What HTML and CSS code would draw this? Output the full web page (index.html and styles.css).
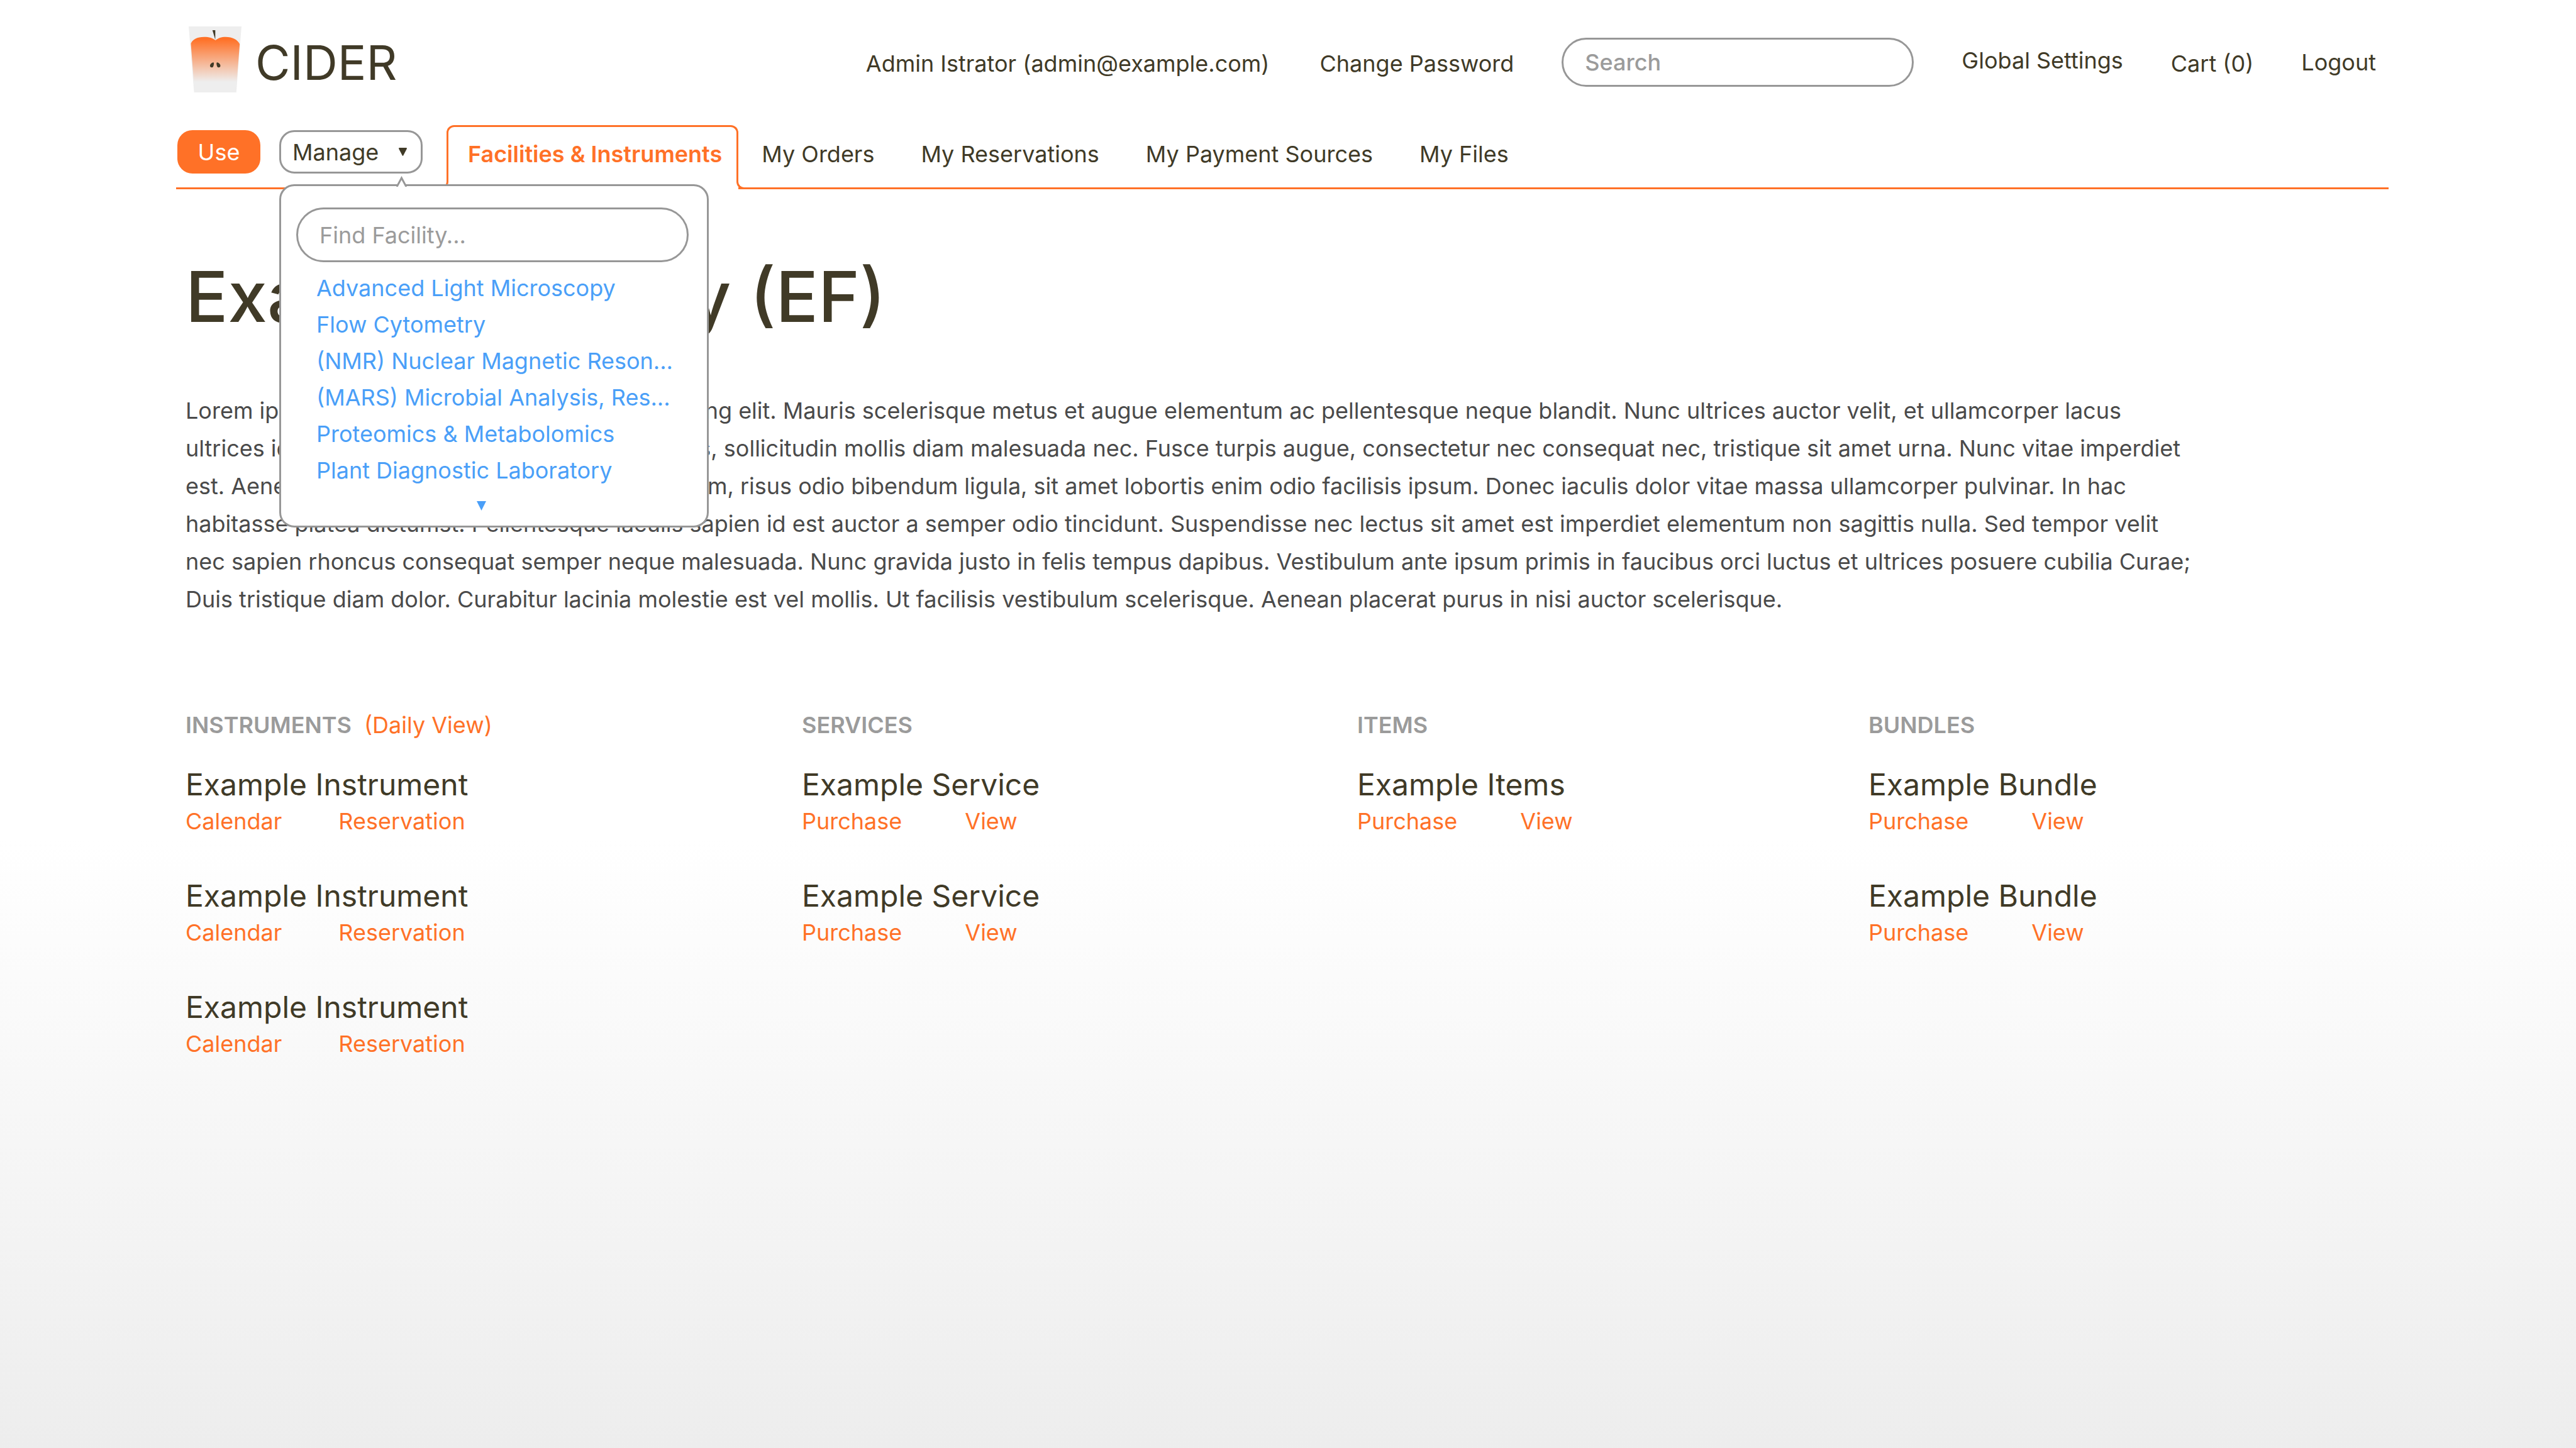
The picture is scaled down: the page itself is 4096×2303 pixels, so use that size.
FILE: index.html
```html
<!DOCTYPE html>
<html lang="en">
<head>
<meta charset="utf-8">
<title>Example Facility (EF) - CIDER</title>
<link rel="stylesheet" href="styles.css">
</head>
<body>
<header class="site-header">
  <a class="brand" href="#">
    <svg class="brand-mark" viewBox="0 0 140 175" aria-hidden="true">
      <defs>
        <linearGradient id="juice" gradientUnits="userSpaceOnUse" x1="0" y1="34" x2="0" y2="147">
          <stop offset="0" stop-color="#ff7127"/>
          <stop offset="1" stop-color="#eeeeee"/>
        </linearGradient>
      </defs>
      <path fill="#eeeeee" d="M0 0H140L126.3 175H14.3Z"/>
      <path fill="url(#juice)" d="M5.8 45.6C11 34 22 28 41 28C55 28 63 31 71 36.7C79 31 86 28 98 28C116 28 129 35 135.3 46.7L127.5 147H13.5Z"/>
      <path fill="#403a27" d="M63 10H70.5V35Z"/>
      <path fill="#403a27" d="M65.5 95.3C67.5 95.5 67.2 102 64.8 107C63.3 109.2 59 109.4 57.4 107C54.4 102.5 60.5 95.3 65.5 95.3Z"/>
      <path fill="#403a27" d="M75.2 95.3C73.2 95.5 73.5 102 75.9 107C77.4 109.2 81.7 109.4 83.3 107C86.3 102.5 80.2 95.3 75.2 95.3Z"/>
    </svg>
    <span class="brand-name">CIDER</span>
  </a>
  <nav class="account" aria-label="Account">
    <a class="account-link account-user low" href="#">Admin Istrator (admin@example.com)</a>
    <a class="account-link low" href="#">Change Password</a>
    <input class="field site-search" type="search" placeholder="Search" aria-label="Search">
    <a class="account-link high" href="#">Global Settings</a>
    <a class="account-link low" href="#">Cart (0)</a>
    <a class="account-link" href="#">Logout</a>
  </nav>
</header>

<nav class="main-nav" aria-label="Main">
  <button class="mode mode-use" type="button">Use</button>
  <div class="manage">
    <button class="mode mode-manage" type="button" aria-expanded="true">Manage
      <svg class="caret" viewBox="0 0 13 13" aria-hidden="true"><path fill="#403a27" d="M1 0H12Q13.3 0.2 12.8 1.8L7.3 12.3Q6.5 13.5 5.7 12.3L0.2 1.8Q-0.3 0.2 1 0Z"/></svg>
    </button>
    <div class="menu">
      <svg class="menu-pointer" viewBox="0 0 17 17" aria-hidden="true"><path fill="#ffffff" d="M1 17L8.5 2L16 17Z"/><path fill="none" stroke="#979797" stroke-width="3" d="M1 17L8.5 3L16 17"/></svg>
      <input class="field menu-search" type="text" placeholder="Find Facility..." aria-label="Find facility">
      <ul class="menu-list">
        <li><a href="#">Advanced Light Microscopy</a></li>
        <li><a href="#">Flow Cytometry</a></li>
        <li><a href="#">(NMR) Nuclear Magnetic Reson...</a></li>
        <li><a href="#">(MARS) Microbial Analysis, Res...</a></li>
        <li><a href="#">Proteomics &amp; Metabolomics</a></li>
        <li><a href="#">Plant Diagnostic Laboratory</a></li>
      </ul>
      <button class="menu-more" type="button" aria-label="More facilities"><svg viewBox="0 0 15 15" aria-hidden="true"><path fill="#4a9ff8" d="M0 0H15L7.5 15Z"/></svg></button>
    </div>
  </div>
  <a class="tab tab-active" href="#"><span class="tab-label">Facilities &amp; Instruments</span></a>
  <a class="tab" href="#">My Orders</a>
  <a class="tab" href="#">My Reservations</a>
  <a class="tab" href="#">My Payment Sources</a>
  <a class="tab" href="#">My Files</a>
</nav>

<main class="content">
  <h1 class="title">Example Facility (EF)</h1>
  <p class="intro">Lorem ipsum dolor sit amet, consectetur adipiscing elit. Mauris scelerisque metus et augue elementum ac pellentesque neque blandit. Nunc ultrices auctor velit, et ullamcorper lacus<br>
  ultrices id. Sed at lorem ornare mi dictum tempus, sollicitudin mollis diam malesuada nec. Fusce turpis augue, consectetur nec consequat nec, tristique sit amet urna. Nunc vitae imperdiet<br>
  est. Aenean mattis, nulla vel tempus feugiat rutrum, risus odio bibendum ligula, sit amet lobortis enim odio facilisis ipsum. Donec iaculis dolor vitae massa ullamcorper pulvinar. In hac<br>
  habitasse platea dictumst. Pellentesque iaculis sapien id est auctor a semper odio tincidunt. Suspendisse nec lectus sit amet est imperdiet elementum non sagittis nulla. Sed tempor velit<br>
  nec sapien rhoncus consequat semper neque malesuada. Nunc gravida justo in felis tempus dapibus. Vestibulum ante ipsum primis in faucibus orci luctus et ultrices posuere cubilia Curae;<br>
  Duis tristique diam dolor. Curabitur lacinia molestie est vel mollis. Ut facilisis vestibulum scelerisque. Aenean placerat purus in nisi auctor scelerisque.</p>

  <div class="catalog">
    <section class="group">
      <div class="group-head"><h2>INSTRUMENTS</h2><a href="#">(Daily View)</a></div>
      <article class="entry"><h3>Example Instrument</h3><div class="actions"><a href="#">Calendar</a><a href="#">Reservation</a></div></article>
      <article class="entry"><h3>Example Instrument</h3><div class="actions"><a href="#">Calendar</a><a href="#">Reservation</a></div></article>
      <article class="entry"><h3>Example Instrument</h3><div class="actions"><a href="#">Calendar</a><a href="#">Reservation</a></div></article>
    </section>
    <section class="group">
      <div class="group-head"><h2>SERVICES</h2></div>
      <article class="entry"><h3>Example Service</h3><div class="actions wide"><a href="#">Purchase</a><a href="#">View</a></div></article>
      <article class="entry"><h3>Example Service</h3><div class="actions wide"><a href="#">Purchase</a><a href="#">View</a></div></article>
    </section>
    <section class="group">
      <div class="group-head"><h2>ITEMS</h2></div>
      <article class="entry"><h3>Example Items</h3><div class="actions wide"><a href="#">Purchase</a><a href="#">View</a></div></article>
    </section>
    <section class="group">
      <div class="group-head"><h2>BUNDLES</h2></div>
      <article class="entry"><h3>Example Bundle</h3><div class="actions wide"><a href="#">Purchase</a><a href="#">View</a></div></article>
      <article class="entry"><h3>Example Bundle</h3><div class="actions wide"><a href="#">Purchase</a><a href="#">View</a></div></article>
    </section>
  </div>
</main>
</body>
</html>
```

FILE: styles.css
```css
:root {
  --ink: #403a27;
  --accent: #ff7127;
  --muted: #9b9b9b;
  --line: #979797;
  --link: #4a9ff8;
}

* { box-sizing: border-box; }

body {
  margin: 0;
  min-height: 100vh;
  padding: 0 298px 0 280px;
  font-family: Inter, "Liberation Sans", sans-serif;
  font-size: 36px;
  color: var(--ink);
  background: linear-gradient(#ffffff 58%, #ededed 100%) no-repeat;
}

a { color: inherit; text-decoration: none; }

button, input { font: inherit; color: inherit; margin: 0; }

svg { display: block; }

/* Header */
.site-header {
  display: flex;
  align-items: center;
  justify-content: space-between;
  height: 199px;
  padding: 0 20px 2px;
}

.brand { display: flex; align-items: center; gap: 22px; }

.brand-mark { width: 84px; height: 105px; margin-bottom: 8px; }

.brand-name { font-size: 76px; line-height: 92px; }

.account { display: flex; align-items: center; gap: 76px; }

.account-link { line-height: 44px; white-space: nowrap; }

.account-user { margin-right: 4px; }

.low { padding-top: 4px; }

.high { padding-bottom: 6px; }

.field {
  border: 3px solid var(--line);
  border-radius: 44px;
  background: #ffffff;
  padding: 0 34px;
  outline: none;
  appearance: none;
}

.field::placeholder { color: var(--muted); opacity: 1; }

.site-search { width: 560px; height: 78px; font-weight: 500; }

/* Main navigation */
.main-nav {
  display: flex;
  align-items: flex-start;
  height: 102px;
  border-bottom: 3px solid var(--accent);
}

.mode {
  height: 69px;
  margin-top: 8px;
  border-radius: 24px;
  line-height: 44px;
}

.mode-use {
  width: 132px;
  margin-left: 2px;
  padding: 0;
  border: 0;
  background: var(--accent);
  color: #ffffff;
}

.manage { position: relative; margin: 0 38px 0 30px; }

.mode-manage {
  display: flex;
  align-items: center;
  justify-content: space-between;
  width: 228px;
  padding: 0 22px 0 18px;
  border: 3px solid var(--line);
  background: #ffffff;
}

.caret { width: 13px; height: 13px; }

.menu {
  position: absolute;
  z-index: 2;
  top: 94px;
  left: 0;
  width: 683px;
  padding: 34px 29px 24px 24px;
  border: 3px solid var(--line);
  border-radius: 24px;
  background: #ffffff;
}

.menu-pointer { position: absolute; left: 183px; top: -16px; width: 17px; height: 17px; }

.menu-search { width: 100%; height: 87px; }

.menu-list { margin: 12px 0 0; padding: 0 0 0 32px; list-style: none; }

.menu-list li { line-height: 58px; white-space: nowrap; }

.menu-list a { color: var(--link); }

.menu-more { display: block; margin: 20px 0 0 287px; padding: 0; border: 0; background: none; }

.menu-more svg { width: 15px; height: 15px; }

.tab { padding: 0 37px; line-height: 92px; white-space: nowrap; }

.tab-active {
  position: relative;
  height: 102px;
  padding: 0 26px 0 34px;
  background: #ffffff;
  color: var(--accent);
  font-weight: 600;
}

.tab-label::before {
  content: "";
  position: absolute;
  inset: 0 0 12px;
  border: 3px solid var(--accent);
  border-bottom: 0;
  border-radius: 12px 12px 0 0;
}

.tab-active::before,
.tab-active::after {
  content: "";
  position: absolute;
  bottom: 0;
  width: 12px;
  height: 12px;
  border-bottom: 3px solid var(--accent);
}

.tab-active::before {
  right: calc(100% - 3px);
  border-right: 3px solid var(--accent);
  border-bottom-right-radius: 12px;
}

.tab-active::after {
  left: calc(100% - 3px);
  border-left: 3px solid var(--accent);
  border-bottom-left-radius: 12px;
}

/* Content */
.content { padding-left: 15px; }

.title {
  margin: 101px 0 83px;
  font-size: 112px;
  line-height: 138px;
  font-weight: 500;
}

.intro { margin: 0 0 148px; line-height: 60px; color: #4a4a4a; white-space: nowrap; }

.catalog { display: grid; grid-template-columns: 980fr 883fr 813fr 827fr; }

.group { display: flex; flex-direction: column; gap: 61px; }

.group-head { display: flex; gap: 20px; line-height: 44px; margin-bottom: -17px; }

.group-head h2 { margin: 0; font-size: 36px; font-weight: 600; color: var(--muted); }

.group-head a, .actions a { color: var(--accent); }

.entry h3 { margin: 0; font-size: 48px; line-height: 58px; font-weight: 400; }

.actions { display: flex; gap: 90px; line-height: 58px; }

.wide { gap: 100px; }
```
